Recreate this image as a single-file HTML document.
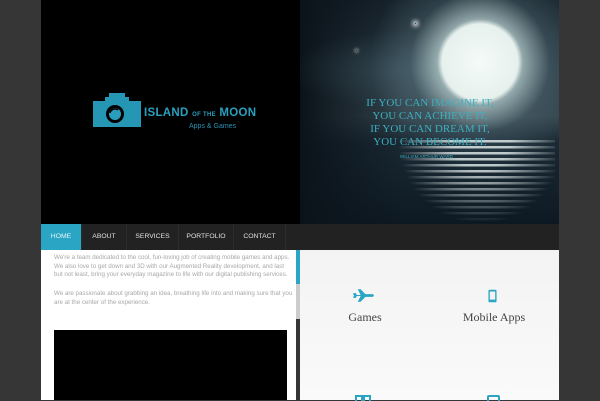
<!DOCTYPE html>
<html><head><meta charset="utf-8"><style>
*{margin:0;padding:0;box-sizing:border-box}
body{width:600px;height:400px;overflow:hidden;background:#363636;font-family:"Liberation Sans",sans-serif;position:relative}
#hdr{position:absolute;left:41px;top:0;width:518px;height:224px;background:#000}
#moonimg{position:absolute;left:259px;top:0;width:259px;height:224px;overflow:hidden;
background:
radial-gradient(circle at 180px 62px,#f4fbf8 0,#e6f0ec 38px,rgba(190,215,215,.7) 43px,rgba(100,130,140,.3) 70px,rgba(0,0,0,0) 110px),
radial-gradient(ellipse 120px 40px at 110px 70px,rgba(80,110,120,.35),transparent),
linear-gradient(90deg,#0b131a 0%,rgba(0,0,0,0) 40%),
linear-gradient(180deg,#17232c 0%,#2a3a44 30%,#32424b 52%,#1a2934 64%,#0d1922 100%);}
#refl{position:absolute;left:70px;top:140px;width:185px;height:84px;
background:repeating-linear-gradient(180deg,rgba(230,240,240,.8) 0,rgba(230,240,240,.8) 2px,rgba(40,60,70,.15) 3px,rgba(40,60,70,.15) 6px);
-webkit-mask-image:radial-gradient(ellipse 45% 100% at 60% 0,#000 35%,transparent 100%);mask-image:radial-gradient(ellipse 45% 100% at 60% 0,#000 35%,transparent 100%)}
.q{position:absolute;left:55px;width:150px;text-align:center;color:#3cb0c0;font-family:"Liberation Serif",serif;font-size:11px;line-height:13px}
#nav{position:absolute;left:41px;top:224px;width:518px;height:26px;background:#222}
#nav div{position:absolute;top:0;height:26px;line-height:26px;text-align:center;color:#e0e0e0;font-size:6.8px;border-right:1px solid #2c2c2c}
#left{position:absolute;left:41px;top:250px;width:255px;height:150px;background:#fff}
#left p{position:absolute;left:13px;width:240px;color:#a8a8a8;font-size:6.2px;line-height:8.6px}
#right{position:absolute;left:300px;top:250px;width:259px;height:150px;background:linear-gradient(#f3f3f3,#fafafa)}
.lbl{position:absolute;text-align:center;width:120px;font-family:"Liberation Serif",serif;font-size:12px;color:#444}
</style></head><body>
<div id="hdr">
 <div id="moonimg"><div id="refl"></div>
  <div style="position:absolute;left:115px;top:23px;width:1px;height:1px;box-shadow:0 0 4px 2px #fff"></div>
  <div style="position:absolute;left:56px;top:50px;width:1px;height:1px;box-shadow:0 0 3px 1px #ccc"></div>
  <div class="q" style="top:97px">IF YOU CAN IMAGINE IT,<br>YOU CAN ACHIEVE IT,<br>IF YOU CAN DREAM IT,<br>YOU CAN BECOME IT.</div>
  <div style="position:absolute;left:100px;top:154px;font-size:4.5px;color:#3cb0c0">WILLIAM ARTHUR WARD</div>
 </div>
 <svg style="position:absolute;left:52px;top:93px" width="48" height="34" viewBox="0 0 48 34">
  <path d="M16 0h16v4h4v4h12v26H0V8h12V4h4z" fill="#2596b4"/>
  <circle cx="22" cy="21" r="9" fill="#000"/><circle cx="22" cy="21" r="6" fill="#2a9fbd"/><path d="M17 20a5 5 0 0 1 8-3" stroke="#000" stroke-width="1.5" fill="none"/>
 </svg>
 <div style="position:absolute;left:103px;top:107px;color:#2aa0c0;font-weight:bold;font-size:11.5px;letter-spacing:.3px;white-space:nowrap">ISLAND <span style="font-size:6px">OF THE</span> MOON</div>
 <div style="position:absolute;left:148px;top:123px;color:#2a90b0;font-size:7px">Apps &amp; Games</div>
</div>
<div id="nav">
 <div style="left:0;width:41px;background:#2aa6c4;color:#e8f6fa">HOME</div>
 <div style="left:41px;width:45px">ABOUT</div>
 <div style="left:86px;width:52px">SERVICES</div>
 <div style="left:138px;width:55px">PORTFOLIO</div>
 <div style="left:193px;width:52px">CONTACT</div>
</div>
<div id="left">
 <p style="top:4px">We're a team dedicated to the cool, fun-loving job of creating mobile games and apps. We also love to get down and 3D with our Augmented Reality development, and last but not least, bring your everyday magazine to life with our digital publishing services.</p>
 <p style="top:40px">We are passionate about grabbing an idea, breathing life into and making sure that you are at the center of the experience.</p>
 <div style="position:absolute;left:13px;top:80px;width:233px;height:70px;background:#000"></div>
</div>
<div style="position:absolute;left:296px;top:250px;width:4px;height:34px;background:#2aa6c4"></div>
<div style="position:absolute;left:296px;top:284px;width:4px;height:35px;background:#ccc"></div>
<div id="right">
 <svg style="position:absolute;left:53px;top:39px" width="21" height="13" viewBox="0 0 22 13"><path d="M0 4h3l1 2h4L5 0h3l5 5h8l1 1.5-1 1.5h-8l-5 5H5l3-6H4l-1 2H0l1-2.5z" fill="#2aa6c4"/></svg>
 <div class="lbl" style="left:5px;top:60px">Games</div>
 <svg style="position:absolute;left:188px;top:39px" width="9" height="14" viewBox="0 0 10 15"><rect x="0.5" y="0.5" width="9" height="14" rx="1.5" fill="#2aa6c4"/><rect x="2" y="2.5" width="6" height="9" fill="#f3f3f3"/></svg>
 <div class="lbl" style="left:134px;top:60px">Mobile Apps</div>
 <svg style="position:absolute;left:55px;top:145px" width="16" height="6"><rect x="1" y="1" width="6" height="6" fill="none" stroke="#2aa6c4" stroke-width="2"/><rect x="9" y="1" width="6" height="6" fill="none" stroke="#2aa6c4" stroke-width="2"/></svg>
 <svg style="position:absolute;left:187px;top:145px" width="13" height="6"><rect x="1" y="1" width="11" height="6" rx="1" fill="none" stroke="#2aa6c4" stroke-width="2"/></svg>
</div>
</body></html>
